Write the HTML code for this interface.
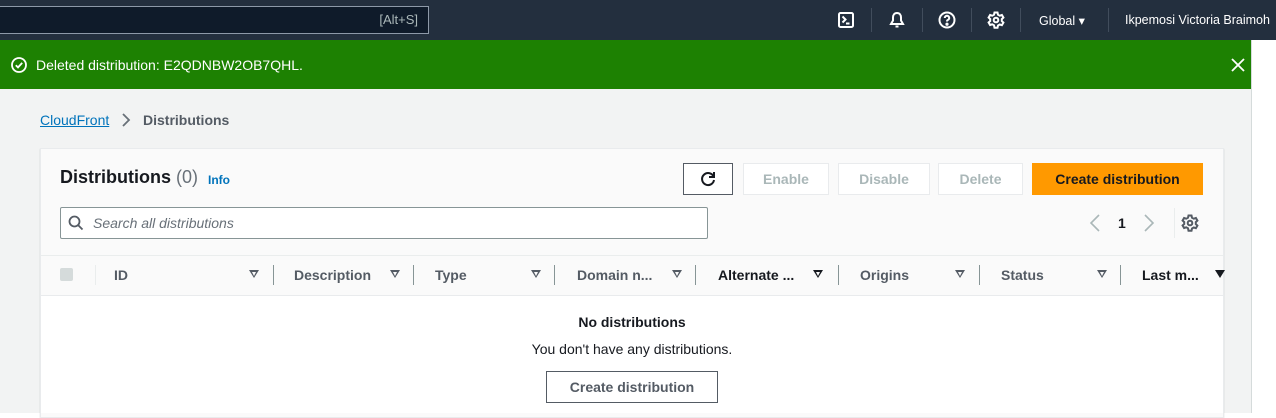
<!DOCTYPE html>
<html><head><meta charset="utf-8"><style>
*{box-sizing:border-box;margin:0;padding:0}
body{width:1276px;height:413px;overflow:hidden;background:#fff;font-family:"Liberation Sans",sans-serif;position:relative;font-size:14px;color:#16191f}
.a{position:absolute}
.top{left:0;top:0;width:1276px;height:40px;background:#232f3e}
.sb{left:-2px;top:6px;width:431px;height:28px;background:#0f1b2a;border:1px solid #8d99a8;color:#aab7b8;font-size:13px;text-align:right;padding:5px 10px 0 0}
.tt{color:#fff;font-size:12.5px;top:13px}
.vs{top:8px;width:1px;height:24px;background:#414d5c}
.green{left:0;top:40px;width:1252px;height:49px;background:#1d8102;color:#fff}
.grey{left:0;top:89px;width:1252px;height:324px;background:#f2f3f3}
.rs{left:1251px;top:40px;width:1px;height:373px;background:#d5dbdb}
.card{left:40px;top:148px;width:1184px;height:270px;background:#fafafa;border:1px solid #e9ebed;box-shadow:0 1px 1px rgba(0,28,36,.2)}
.btn{top:163px;height:32px;border:1px solid #e9ebed;background:#fff;color:#aab7b8;font-weight:bold;font-size:14px;text-align:center;line-height:30px}
.th{top:267px;font-weight:bold;color:#545b64;font-size:14px}
.tri{top:270px;width:0;height:0;border-left:5px solid transparent;border-right:5px solid transparent;border-top:8px solid #545b64}
.tri::after{content:"";position:absolute;left:-2.5px;top:-6.5px;border-left:2.5px solid transparent;border-right:2.5px solid transparent;border-top:4px solid #fafafa}
.cs{top:265px;width:1px;height:20px;background:#879596}
</style></head><body>
<div class="a top"></div>
<div class="a sb">[Alt+S]</div>
<svg class="a" style="left:838px;top:12px" width="16" height="16" viewBox="0 0 16 16" fill="none" stroke="#fff" stroke-width="2"><rect x="1" y="1" width="14" height="14" rx="1.5"/><path d="M4.5 4.5l3 3-3 3M8 11.5h3.5"/></svg>
<div class="a vs" style="left:871px"></div>
<svg class="a" style="left:888px;top:11px" width="18" height="18" viewBox="0 0 18 18" fill="none" stroke="#fff" stroke-width="2"><path d="M9 2c-2.5 0-4 2-4 4.5v3L3 13h12l-2-3.5v-3C13 4 11.5 2 9 2zM7.5 15.5h3"/></svg>
<div class="a vs" style="left:922px"></div>
<svg class="a" style="left:938px;top:11px" width="18" height="18" viewBox="0 0 18 18" fill="none" stroke="#fff" stroke-width="2"><circle cx="9" cy="9" r="7.5"/><path d="M6.8 7a2.2 2.2 0 1 1 3 2c-.6.3-.8.7-.8 1.5"/><circle cx="9" cy="13.2" r=".6" fill="#fff"/></svg>
<div class="a vs" style="left:971px"></div>
<svg class="a" style="left:987px;top:11px" width="18" height="18" viewBox="0 0 18 18" fill="none" stroke="#fff" stroke-width="2"><path d="M7.5 1.5h3l.5 2.2 1.8 1 2.1-.7 1.5 2.6-1.6 1.5v2l1.6 1.5-1.5 2.6-2.1-.7-1.8 1-.5 2.2h-3L7 14.3l-1.8-1-2.1.7-1.5-2.6L3.2 10V8L1.6 6.6l1.5-2.6 2.1.7 1.8-1z"/><circle cx="9" cy="9" r="2.3"/></svg>
<div class="a vs" style="left:1020px"></div>
<div class="a tt" style="left:1039px">Global ▾</div>
<div class="a vs" style="left:1108px"></div>
<div class="a tt" style="left:1125px">Ikpemosi Victoria Braimoh</div>

<div class="a green"></div>
<svg class="a" style="left:11px;top:57px" width="16" height="16" viewBox="0 0 16 16" fill="none" stroke="#fff" stroke-width="1.8"><circle cx="8" cy="8" r="7"/><path d="M4.8 8.2l2.2 2.2 4.2-4.5"/></svg>
<div class="a" style="left:36px;top:57px;color:#fff;font-size:14px">Deleted distribution: E2QDNBW2OB7QHL.</div>
<svg class="a" style="left:1231px;top:58px" width="14" height="14" viewBox="0 0 14 14" stroke="#fff" stroke-width="1.8"><path d="M1 1l12 12M13 1L1 13"/></svg>

<div class="a grey"></div>
<div class="a rs"></div>
<div class="a" style="left:40px;top:112px;color:#0073bb;text-decoration:underline;font-size:14px">CloudFront</div>
<svg class="a" style="left:121px;top:113px" width="10" height="14" viewBox="0 0 10 14" fill="none" stroke="#687078" stroke-width="1.8"><path d="M2 1l6 6-6 6"/></svg>
<div class="a" style="left:143px;top:112px;color:#545b64;font-weight:bold;font-size:14px">Distributions</div>

<div class="a card"></div>
<div class="a" style="left:41px;top:295px;width:1182px;height:118px;background:#fff;border-top:1px solid #e9ebed"></div>
<div class="a" style="left:41px;top:255px;width:1182px;height:1px;background:#eaeded"></div>
<div class="a" style="left:60px;top:167px;font-size:18px;font-weight:bold">Distributions <span style="font-weight:normal;color:#687078">(0)</span></div>
<div class="a" style="left:208px;top:173px;font-size:12px;font-weight:bold;color:#0073bb">Info</div>

<div class="a btn" style="left:683px;width:50px;border:1px solid #545b64"></div>
<svg class="a" style="left:699px;top:170px" width="18" height="18" viewBox="0 0 18 18" fill="none" stroke="#16191f" stroke-width="2"><path d="M14.5 6.5A6 6 0 1 0 15 10"/><path d="M15 2v5h-5"/></svg>
<div class="a btn" style="left:743px;width:86px">Enable</div>
<div class="a btn" style="left:838px;width:92px">Disable</div>
<div class="a btn" style="left:938px;width:85px">Delete</div>
<div class="a btn" style="left:1032px;width:171px;background:#ff9900;border-color:#ff9900;color:#16191f">Create distribution</div>

<div class="a" style="left:60px;top:207px;width:648px;height:32px;background:#fff;border:1px solid #879596;border-radius:2px"></div>
<svg class="a" style="left:68px;top:215px" width="16" height="16" viewBox="0 0 16 16" fill="none" stroke="#545b64" stroke-width="1.8"><circle cx="6.5" cy="6.5" r="5"/><path d="M10 10l4.5 4.5"/></svg>
<div class="a" style="left:93px;top:215px;font-style:italic;color:#687078;font-size:14px">Search all distributions</div>
<svg class="a" style="left:1089px;top:214px" width="12" height="18" viewBox="0 0 12 18" fill="none" stroke="#aab7b8" stroke-width="1.6"><path d="M10 1L2 9l8 8"/></svg>
<div class="a" style="left:1118px;top:215px;font-weight:bold;font-size:14px">1</div>
<svg class="a" style="left:1143px;top:214px" width="12" height="18" viewBox="0 0 12 18" fill="none" stroke="#aab7b8" stroke-width="1.6"><path d="M2 1l8 8-8 8"/></svg>
<div class="a" style="left:1174px;top:208px;width:1px;height:30px;background:#eaeded"></div>
<svg class="a" style="left:1181px;top:214px" width="18" height="18" viewBox="0 0 18 18" fill="none" stroke="#545b64" stroke-width="2"><path d="M7.5 1.5h3l.5 2.2 1.8 1 2.1-.7 1.5 2.6-1.6 1.5v2l1.6 1.5-1.5 2.6-2.1-.7-1.8 1-.5 2.2h-3L7 14.3l-1.8-1-2.1.7-1.5-2.6L3.2 10V8L1.6 6.6l1.5-2.6 2.1.7 1.8-1z"/><circle cx="9" cy="9" r="2.3"/></svg>

<div class="a" style="left:60px;top:268px;width:13px;height:13px;background:#d5dbdb;border-radius:2px"></div>
<div class="a" style="left:95px;top:265px;width:1px;height:20px;background:#eaeded"></div>
<div class="a th" style="left:114px">ID</div><div class="a tri" style="left:249px"></div><div class="a cs" style="left:273px"></div>
<div class="a th" style="left:294px">Description</div><div class="a tri" style="left:390px"></div><div class="a cs" style="left:413px"></div>
<div class="a th" style="left:435px">Type</div><div class="a tri" style="left:531px"></div><div class="a cs" style="left:554px"></div>
<div class="a th" style="left:577px">Domain n...</div><div class="a tri" style="left:672px"></div><div class="a cs" style="left:695px"></div>
<div class="a th" style="left:718px;color:#16191f">Alternate ...</div><div class="a tri" style="left:813px;border-top-color:#16191f"></div><div class="a cs" style="left:838px"></div>
<div class="a th" style="left:860px">Origins</div><div class="a tri" style="left:955px"></div><div class="a cs" style="left:979px"></div>
<div class="a th" style="left:1001px">Status</div><div class="a tri" style="left:1097px"></div><div class="a cs" style="left:1120px"></div>
<div class="a th" style="left:1142px;color:#16191f">Last m...</div><div class="a" style="left:1215px;top:270px;border-left:5px solid transparent;border-right:5px solid transparent;border-top:8px solid #16191f"></div>

<div class="a" style="left:0;width:1264px;top:314px;text-align:center;font-weight:bold;font-size:14px">No distributions</div>
<div class="a" style="left:0;width:1264px;top:341px;text-align:center;font-size:14px">You don't have any distributions.</div>
<div class="a" style="left:546px;top:371px;width:172px;height:32px;border:1px solid #545b64;background:#fff;text-align:center;line-height:30px;font-weight:bold;color:#545b64">Create distribution</div>
</body></html>
